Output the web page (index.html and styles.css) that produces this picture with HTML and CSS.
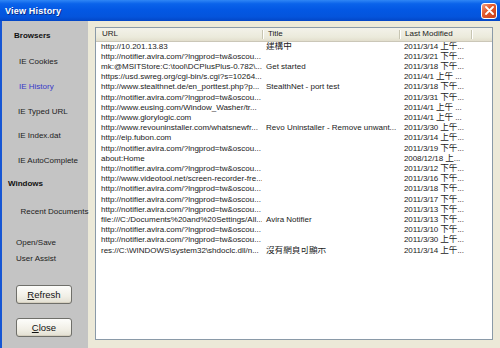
FILE: index.html
```html
<!DOCTYPE html>
<html lang="en">
<head>
	<meta charset="UTF-8">
	<title>View History</title>
	<link rel="stylesheet" href="styles.css">
</head>
<body>
	<div id="window">
		<div class="titlebar">
			<span class="title">View History</span>
			<span class="close-btn">
				<svg width="9" height="9" viewBox="0 0 9 9"><path d="M1 1 L8 8 M8 1 L1 8" stroke="#fff" stroke-width="1.8" stroke-linecap="round"/></svg>
			</span>
		</div>
		<div class="client">
			<div class="sidebar">
				<div class="group g-browsers">Browsers</div>
				<div class="item first">IE Cookies</div>
				<div class="item active">IE History</div>
				<div class="item shift">IE Typed URL</div>
				<div class="item shift">IE Index.dat</div>
				<div class="item shift">IE AutoComplete</div>
				<div class="group g-windows">Windows</div>
				<div class="item recent">Recent Documents</div>
				<div class="item opensave">Open/Save</div>
				<div class="item assist">User Assist</div>
				<div class="btn refresh"><u>R</u>efresh</div>
				<div class="btn close"><u>C</u>lose</div>
			</div>
			<div class="main">
				<div class="listview">
					<table>
						<colgroup>
							<col class="c-url">
							<col class="c-title">
							<col class="c-date">
							<col class="c-rest">
						</colgroup>
						<thead>
							<tr><th>URL</th><th>Title</th><th>Last Modified</th><th></th></tr>
						</thead>
						<tbody>
							<tr><td>http://10.201.13.83</td><td><span class="zh">建構中</span></td><td>2011/3/14 <span class="zh">上午</span>...</td><td></td></tr>
							<tr><td>http://notifier.avira.com/?lngprod=tw&amp;oscou...</td><td></td><td>2011/3/21 <span class="zh">下午</span>...</td><td></td></tr>
							<tr><td>mk:@MSITStore:C:\tool\DCPlusPlus-0.782\...</td><td>Get started</td><td>2011/3/18 <span class="zh">下午</span>...</td><td></td></tr>
							<tr><td>https://usd.swreg.org/cgi-bin/s.cgi?s=10264...</td><td></td><td>2011/4/1 <span class="zh">上午</span> ...</td><td></td></tr>
							<tr><td>http://www.stealthnet.de/en_porttest.php?p...</td><td>StealthNet - port test</td><td>2011/3/18 <span class="zh">下午</span>...</td><td></td></tr>
							<tr><td>http://notifier.avira.com/?lngprod=tw&amp;oscou...</td><td></td><td>2011/3/31 <span class="zh">下午</span>...</td><td></td></tr>
							<tr><td>http://www.eusing.com/Window_Washer/tr...</td><td></td><td>2011/4/1 <span class="zh">上午</span> ...</td><td></td></tr>
							<tr><td>http://www.glorylogic.com</td><td></td><td>2011/4/1 <span class="zh">上午</span> ...</td><td></td></tr>
							<tr><td>http://www.revouninstaller.com/whatsnewfr...</td><td>Revo Uninstaller - Remove unwant...</td><td>2011/3/30 <span class="zh">上午</span>...</td><td></td></tr>
							<tr><td>http://eip.fubon.com</td><td></td><td>2011/3/14 <span class="zh">上午</span>...</td><td></td></tr>
							<tr><td>http://notifier.avira.com/?lngprod=tw&amp;oscou...</td><td></td><td>2011/3/19 <span class="zh">下午</span>...</td><td></td></tr>
							<tr><td>about:Home</td><td></td><td>2008/12/18 <span class="zh">上</span>...</td><td></td></tr>
							<tr><td>http://notifier.avira.com/?lngprod=tw&amp;oscou...</td><td></td><td>2011/3/12 <span class="zh">下午</span>...</td><td></td></tr>
							<tr><td>http://www.videotool.net/screen-recorder-fre...</td><td></td><td>2011/3/16 <span class="zh">下午</span>...</td><td></td></tr>
							<tr><td>http://notifier.avira.com/?lngprod=tw&amp;oscou...</td><td></td><td>2011/3/18 <span class="zh">下午</span>...</td><td></td></tr>
							<tr><td>http://notifier.avira.com/?lngprod=tw&amp;oscou...</td><td></td><td>2011/3/17 <span class="zh">下午</span>...</td><td></td></tr>
							<tr><td>http://notifier.avira.com/?lngprod=tw&amp;oscou...</td><td></td><td>2011/3/13 <span class="zh">下午</span>...</td><td></td></tr>
							<tr><td>file:///C:/Documents%20and%20Settings/All...</td><td>Avira Notifier</td><td>2011/3/13 <span class="zh">下午</span>...</td><td></td></tr>
							<tr><td>http://notifier.avira.com/?lngprod=tw&amp;oscou...</td><td></td><td>2011/3/10 <span class="zh">下午</span>...</td><td></td></tr>
							<tr><td>http://notifier.avira.com/?lngprod=tw&amp;oscou...</td><td></td><td>2011/3/30 <span class="zh">上午</span>...</td><td></td></tr>
							<tr><td>res://C:\WINDOWS\system32\shdoclc.dll/n...</td><td><span class="zh">沒有網頁可顯示</span></td><td>2011/3/14 <span class="zh">上午</span>...</td><td></td></tr>
						</tbody>
					</table>
				</div>
			</div>
		</div>
	</div>
</body>
</html>
```

FILE: styles.css
```css
html,
body {
	margin: 0;
	padding: 0;
	background: #ece9d8;
}
body {
	font-family: "Liberation Sans", "Noto Sans CJK TC", sans-serif;
	font-size: 8px;
	color: #1a1a1a;
}
#window {
	width: 500px;
	height: 348px;
	overflow: hidden;
}
.titlebar {
	height: 21px;
	display: flex;
	align-items: center;
	justify-content: space-between;
	padding: 0 3px 0 5px;
	box-sizing: border-box;
	background: linear-gradient(#2f86f5 0%, #0a63ea 18%, #0358e4 45%, #0454dc 80%, #0346c6 100%);
}
.title {
	color: #fff;
	font-weight: bold;
	font-size: 9px;
	letter-spacing: 0.2px;
	text-shadow: 1px 1px 0 #0a2f8c;
}
.close-btn {
	width: 14px;
	height: 14px;
	display: flex;
	align-items: center;
	justify-content: center;
	border: 1px solid #fff;
	border-radius: 3px;
	background: linear-gradient(135deg, #f2a184 0%, #e25b2f 40%, #c93f1b 100%);
}
.client {
	display: flex;
	height: 327px;
	border-left: 2px solid #1656d4;
}
.sidebar {
	width: 86px;
	flex: none;
	background: #c4c4c4;
	padding-top: 10px;
	box-sizing: border-box;
}
.group,
.item {
	line-height: 10px;
	height: 10px;
	white-space: nowrap;
}
.group {
	font-weight: bold;
	color: #111;
}
.g-browsers {
	padding-left: 12px;
}
.g-windows {
	padding-left: 6px;
	margin-top: 13px;
}
.item {
	padding-left: 17px;
	margin-top: 14.8px;
	color: #222;
}
.item.first {
	margin-top: 16px;
}
.item.shift {
	padding-left: 16px;
}
.item.active {
	color: #3838c8;
}
.item.recent {
	padding-left: 18.5px;
	margin-top: 17.7px;
}
.item.opensave {
	padding-left: 14px;
	margin-top: 21.6px;
}
.item.assist {
	padding-left: 14px;
	margin-top: 5.7px;
}
.btn {
	width: 56px;
	height: 19px;
	margin-left: 14px;
	box-sizing: border-box;
	border: 1px solid #6f6f6a;
	border-radius: 3px;
	background: linear-gradient(#fdfdfb 0%, #f1efe6 60%, #e2dfd2 100%);
	box-shadow: inset 0 -1px 0 #d6d0c0;
	text-align: center;
	line-height: 17px;
	font-size: 9.5px;
	color: #111;
}
.btn.refresh {
	margin-top: 21px;
}
.btn.close {
	margin-top: 14px;
}
.main {
	flex: 1;
	padding: 6px 7px 8px 7px;
}
.listview {
	height: 100%;
	box-sizing: border-box;
	border: 1px solid #8a9aa8;
	background: #fff;
	overflow: hidden;
}
table {
	width: 396px;
	table-layout: fixed;
	border-collapse: collapse;
}
.c-url { width: 166px; }
.c-title { width: 137px; }
.c-date { width: 72px; }
.c-rest { width: 21px; }
th {
	height: 13px;
	padding: 0 0 0 6px;
	text-align: left;
	font-weight: normal;
	line-height: 12px;
	color: #222;
	background: linear-gradient(#f3f2ea 0%, #ebeadb 70%, #e2decd 100%);
	border-bottom: 1px solid #cbc7b8;
	box-sizing: border-box;
	position: relative;
}
th + th::before {
	content: "";
	position: absolute;
	left: 0;
	top: 2px;
	bottom: 2px;
	width: 1px;
	background: #c7c5b2;
	box-shadow: 1px 0 0 #fff;
}
td {
	height: 10.2px;
	line-height: 10.2px;
	padding: 0 0 0 5px;
	white-space: nowrap;
	overflow: hidden;
	color: #1a1a1a;
}
td + td {
	padding-left: 4px;
}
td:nth-child(3) {
	padding-left: 5px;
	letter-spacing: -0.1px;
}
.zh {
	font-size: 8.6px;
	line-height: 0;
	letter-spacing: 0;
}
```
